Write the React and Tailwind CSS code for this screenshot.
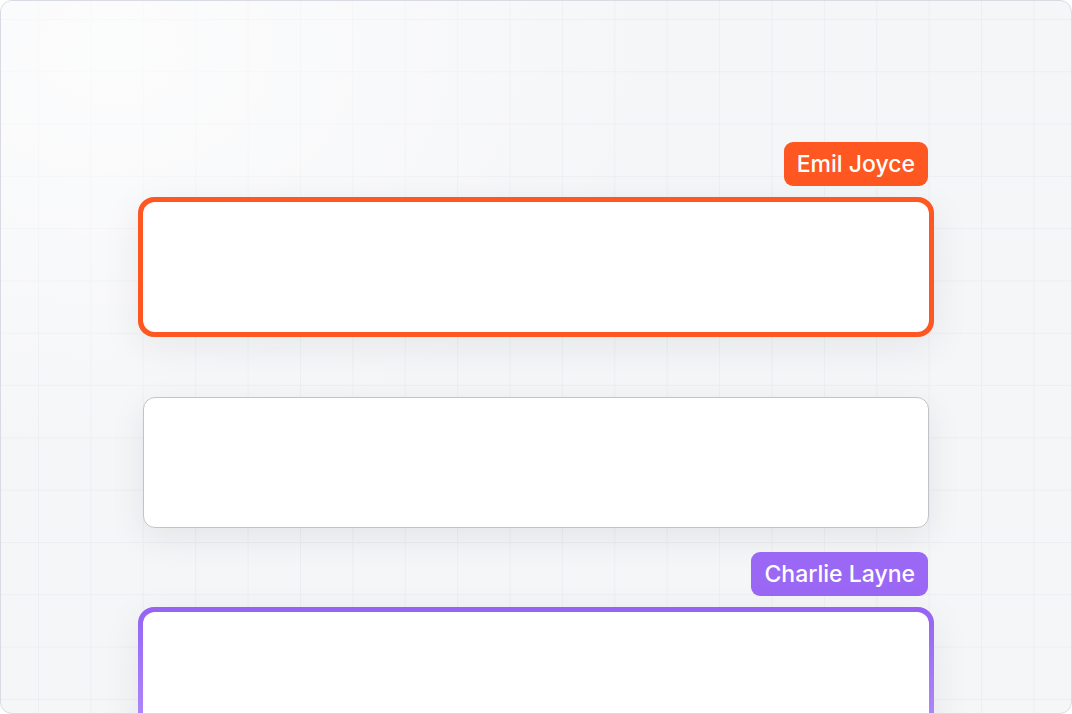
const GRID =
  "bg-[linear-gradient(to_right,#eceef1_1px,transparent_1px),linear-gradient(to_bottom,#eceef1_1px,transparent_1px)] bg-[size:52.4px_52.3px] bg-[position:37px_18px]";

function Tag({ name, color }) {
  return (
    <div className="flex justify-end pr-[6px]">
      <div
        className={`h-[44px] px-[13px] flex items-center rounded-[9px] text-white text-[23px] font-medium ${color}`}
      >
        {name}
      </div>
    </div>
  );
}

function Card() {
  return (
    <div className="h-[130px] rounded-[12px] bg-white" />
  );
}

export default function App() {
  return (
    <div className="w-[1072px] h-[714px] bg-white" style={{ fontFamily: "Inter, 'Noto Sans', sans-serif" }}>
      <div className="w-full h-full rounded-[12px] border border-[#d8dce2] overflow-hidden bg-[#f5f6f8]">
        <div className={`w-full h-full ${GRID}`}>
          <div className="w-full h-full bg-[radial-gradient(ellipse_560px_420px_at_110px_50px,rgba(255,255,255,0.7),rgba(255,255,255,0)_100%)]">
            <div className="w-[796px] mx-auto pt-[141px] flex flex-col">
              {/* first selected card */}
              <Tag name="Emil Joyce" color="bg-[#ff5722]" />
              <div className="mt-[11px] p-[5px] rounded-[16px] bg-[#ff5722] shadow-[0_10px_40px_rgba(15,23,42,0.07)]">
                <Card />
              </div>

              {/* plain card */}
              <div className="mt-[60px] mx-[5px] h-[131px] rounded-[12px] bg-white border border-[#c2c3c6] shadow-[0_10px_36px_rgba(15,23,42,0.08)]" />

              {/* second selected card */}
              <div className="mt-[24px]">
                <Tag name="Charlie Layne" color="bg-[#9a68f5]" />
              </div>
              <div className="mt-[11px] p-[5px] rounded-[16px] bg-gradient-to-b from-[#9563f2] to-[#b48ffa] shadow-[0_10px_40px_rgba(15,23,42,0.07)]">
                <Card />
              </div>
            </div>
          </div>
        </div>
      </div>
    </div>
  );
}
